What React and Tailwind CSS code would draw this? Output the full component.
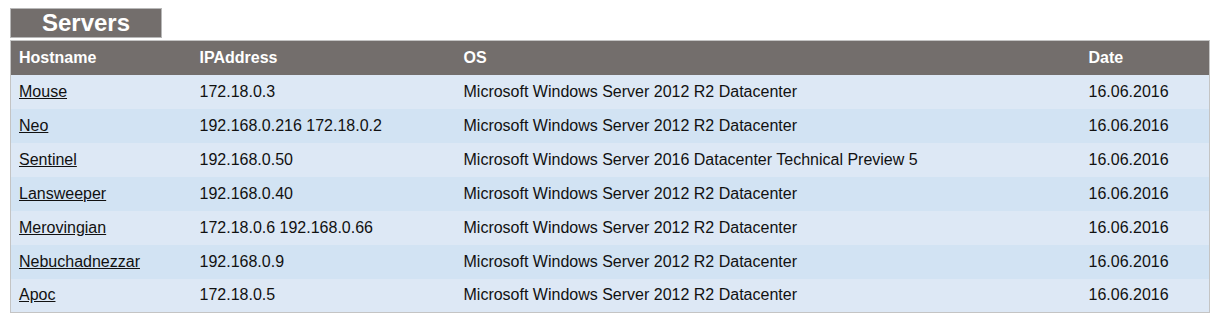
import React from "react";

const servers = [
  { host: "Mouse", ip: "172.18.0.3", os: "Microsoft Windows Server 2012 R2 Datacenter", date: "16.06.2016" },
  { host: "Neo", ip: "192.168.0.216 172.18.0.2", os: "Microsoft Windows Server 2012 R2 Datacenter", date: "16.06.2016" },
  { host: "Sentinel", ip: "192.168.0.50", os: "Microsoft Windows Server 2016 Datacenter Technical Preview 5", date: "16.06.2016" },
  { host: "Lansweeper", ip: "192.168.0.40", os: "Microsoft Windows Server 2012 R2 Datacenter", date: "16.06.2016" },
  { host: "Merovingian", ip: "172.18.0.6 192.168.0.66", os: "Microsoft Windows Server 2012 R2 Datacenter", date: "16.06.2016" },
  { host: "Nebuchadnezzar", ip: "192.168.0.9", os: "Microsoft Windows Server 2012 R2 Datacenter", date: "16.06.2016" },
  { host: "Apoc", ip: "172.18.0.5", os: "Microsoft Windows Server 2012 R2 Datacenter", date: "16.06.2016" },
];

export default function App() {
  return (
    <div className="bg-white w-[1211px] h-[315px] pl-[10px] pt-[8px] font-['Liberation_Sans',Arial,sans-serif] text-[16px] text-[#111]">
      {/* title */}
      <div className="w-[152px] h-[30px] bg-[#736e6c] border border-[#b8b8b8] text-white font-bold text-[24px] leading-[28px] text-center">
        Servers
      </div>

      {/* table */}
      <table className="mt-[2px] w-[1200px] border border-[#c4c4c4] border-collapse table-fixed">
        <colgroup>
          <col className="w-[181px]" />
          <col className="w-[264px]" />
          <col className="w-[625px]" />
          <col />
        </colgroup>
        <thead>
          <tr className="bg-[#736e6c] text-white h-[34px]">
            <th className="text-left font-bold pl-[8px]">Hostname</th>
            <th className="text-left font-bold pl-[8px]">IPAddress</th>
            <th className="text-left font-bold pl-[8px]">OS</th>
            <th className="text-left font-bold pl-[8px]">Date</th>
          </tr>
        </thead>
        <tbody>
          {servers.map((s, i) => (
            <tr key={s.host} className={i % 2 === 0 ? "bg-[#dde8f5] h-[34px]" : "bg-[#d2e3f3] h-[34px]"}>
              <td className="pl-[8px]">
                <a href="#" className="underline text-[#111]">{s.host}</a>
              </td>
              <td className="pl-[8px]">{s.ip}</td>
              <td className="pl-[8px]">{s.os}</td>
              <td className="pl-[8px]">{s.date}</td>
            </tr>
          ))}
        </tbody>
      </table>
    </div>
  );
}
